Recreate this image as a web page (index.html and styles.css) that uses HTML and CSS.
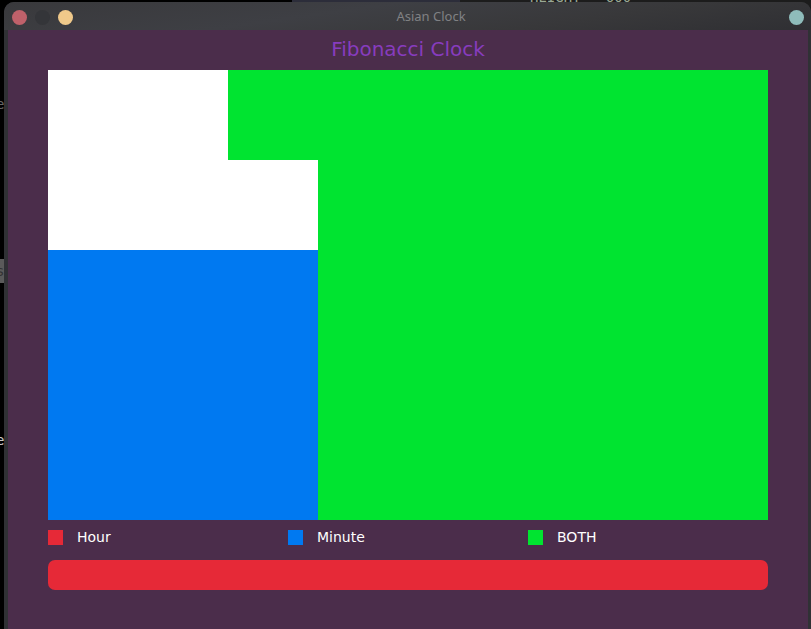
FILE: index.html
```html
<!DOCTYPE html>
<html lang="en">
<head>
<meta charset="utf-8">
<meta name="viewport" content="width=device-width, initial-scale=1">
<title>Asian Clock</title>
<link rel="stylesheet" href="styles.css">
</head>
<body>
<div class="backdrop" aria-hidden="true">
  <span class="backdrop-tab"></span>
  <span class="backdrop-editor"></span>
  <span class="backdrop-code">HEIGHT = 600</span>
  <span class="backdrop-letter first">e</span>
  <span class="backdrop-letter second">s</span>
  <span class="backdrop-letter third">e</span>
</div>
<div class="window">
  <header class="titlebar">
    <button class="dot close" type="button" aria-label="Close"></button>
    <button class="dot menu" type="button" aria-label="Menu"></button>
    <button class="dot minimize" type="button" aria-label="Minimize"></button>
    <span class="window-title">Asian Clock</span>
    <button class="dot maximize" type="button" aria-label="Maximize"></button>
  </header>
  <main class="content">
    <h1 class="heading">Fibonacci Clock</h1>
    <div class="clock">
      <div class="two off"></div>
      <div class="one-top both"></div>
      <div class="one-bottom off"></div>
      <div class="three minute"></div>
      <div class="five both"></div>
    </div>
    <ul class="legend">
      <li><span class="swatch hour"></span>Hour</li>
      <li><span class="swatch minute"></span>Minute</li>
      <li><span class="swatch both"></span>BOTH</li>
    </ul>
    <div class="bar hour"></div>
  </main>
</div>
</body>
</html>
```
FILE: styles.css
```css
* {
  box-sizing: border-box;
}

body {
  margin: 0;
  background: #000;
  overflow: hidden;
}

.backdrop {
  position: absolute;
  inset: 0;
  overflow: hidden;
  font: 14px/16px "DejaVu Sans Mono", monospace;
  color: #c8c8c8;
}

.backdrop span {
  position: absolute;
}

.backdrop .backdrop-tab {
  left: 292px;
  right: 0;
  top: 0;
  height: 12px;
  background: #2c2d3a;
}

.backdrop .backdrop-editor {
  left: 460px;
  right: 0;
  top: 0;
  height: 12px;
  background: #1c1c1c;
}

.backdrop .backdrop-code {
  left: 530px;
  top: -11px;
  color: #9aa894;
}

.backdrop .backdrop-letter {
  left: -4px;
  width: 8px;
}

.backdrop .first {
  top: 96px;
  color: #666;
}

.backdrop .second {
  top: 259px;
  height: 24px;
  line-height: 24px;
  background: #5a5a5a;
  color: #333;
}

.backdrop .third {
  top: 432px;
}

.window {
  position: relative;
  display: flex;
  flex-direction: column;
  min-height: calc(100vh - 2px);
  margin: 2px 0 0 4px;
  padding: 0 3px 0 4px;
  border-radius: 10px 10px 0 0;
  background: #303135;
}

.titlebar {
  display: flex;
  align-items: center;
  gap: 8px;
  height: 28px;
  margin: 0 -3px 0 -4px;
  padding: 3px 7px 0 8px;
  border-radius: 10px 10px 0 0;
  background: linear-gradient(172deg, #39393c, #3e3f44 40%, #38383a 70%, #2f2f33);
}

.dot {
  width: 15px;
  height: 15px;
  padding: 0;
  border: 0;
  border-radius: 50%;
}

.close {
  background: #bf616a;
}

.menu {
  background: #343539;
}

.minimize {
  background: #f0c98a;
}

.maximize {
  background: #8fbcbb;
}

.window-title {
  flex: 1;
  align-self: flex-start;
  font: 13px/22px "Noto Sans", sans-serif;
  text-align: center;
  color: #808184;
}

.content {
  flex: 1;
  padding: 0 40px 39px;
  background: #4b2d4b;
  font-family: "DejaVu Sans", sans-serif;
}

.heading {
  margin: 0;
  padding-bottom: 2px;
  font-size: 20px;
  font-weight: 400;
  line-height: 38px;
  text-align: center;
  color: #873cbe;
}

.clock {
  display: grid;
  grid-template-columns: repeat(8, 1fr);
  grid-template-rows: repeat(5, 1fr);
  aspect-ratio: 8 / 5;
}

.two {
  grid-area: 1 / 1 / 3 / 3;
}

.one-top {
  grid-area: 1 / 3 / 2 / 4;
}

.one-bottom {
  grid-area: 2 / 3 / 3 / 4;
}

.three {
  grid-area: 3 / 1 / 6 / 4;
}

.five {
  grid-area: 1 / 4 / 6 / 9;
}

.off {
  background: #fff;
}

.hour {
  background: #e62937;
}

.minute {
  background: #0079f1;
}

.both {
  background: #00e430;
}

.legend {
  display: grid;
  grid-template-columns: repeat(3, 1fr);
  height: 40px;
  margin: 0;
  padding: 10px 0 0;
  list-style: none;
  font-size: 14px;
  line-height: 15px;
  color: #fff;
}

.legend li {
  display: flex;
  align-items: flex-start;
  gap: 14px;
}

.swatch {
  width: 15px;
  height: 15px;
}

.bar {
  height: 30px;
  border-radius: 7px;
}
```
